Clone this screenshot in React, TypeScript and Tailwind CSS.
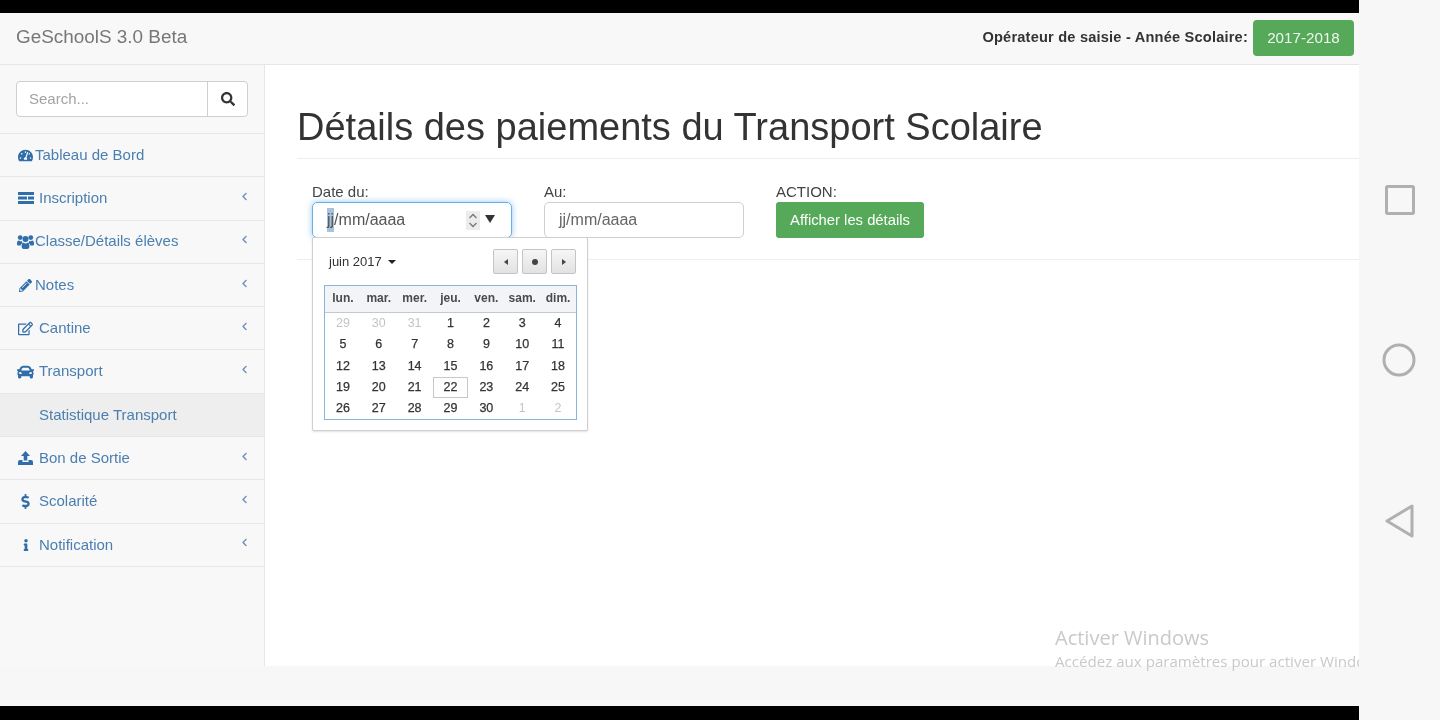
import React from "react";
import { FaTachometerAlt, FaPencilAlt, FaRegEdit, FaCar, FaDollarSign, FaInfo, FaSearch, FaChevronLeft } from "react-icons/fa";

function ListIcon() {
  return (
    <svg width="16" height="12" viewBox="0 0 16 12" fill="currentColor">
      <rect x="0" y="0" width="16" height="3" />
      <rect x="0" y="4.5" width="9" height="3" />
      <rect x="10" y="4.5" width="6" height="3" />
      <rect x="0" y="9" width="16" height="3" />
    </svg>
  );
}

function OpenIcon() {
  return (
    <svg width="15" height="14" viewBox="0 0 15 14" fill="currentColor">
      <path d="M7.5 0 L12 5 H9.3 V9.5 H5.7 V5 H3 Z" />
      <path d="M0 11 Q0 9 2 9 H4.5 V11 H10.5 V9 H13 Q15 9 15 11 V14 H0 Z" />
    </svg>
  );
}

function UsersIcon() {
  return (
    <svg width="17" height="14" viewBox="0 0 17 14" fill="currentColor">
      <circle cx="3.2" cy="2.6" r="2.4" />
      <circle cx="13.8" cy="2.6" r="2.4" />
      <circle cx="8.5" cy="4" r="3" />
      <path d="M0 9 Q0 5.6 2 5.6 Q3 6.4 4.6 6 Q4.8 7.6 6 8 Q3.6 8.6 3.6 10.4 H0.8 Q0 10.4 0 9 Z" />
      <path d="M17 9 Q17 5.6 15 5.6 Q14 6.4 12.4 6 Q12.2 7.6 11 8 Q13.4 8.6 13.4 10.4 H16.2 Q17 10.4 17 9 Z" />
      <path d="M4.6 11.6 Q4.6 7.8 6.4 7.8 Q8.5 9.2 10.6 7.8 Q12.4 7.8 12.4 11.6 Q12.4 14 10.6 14 H6.4 Q4.6 14 4.6 11.6 Z" />
    </svg>
  );
}

type Item = { label: string; icon: React.ReactNode; tight?: boolean; chevron?: boolean; sub?: string };

const items: Item[] = [
  { label: "Tableau de Bord", icon: <FaTachometerAlt size={15} />, tight: true },
  { label: "Inscription", icon: <ListIcon />, chevron: true },
  { label: "Classe/Détails élèves", icon: <UsersIcon />, tight: true, chevron: true },
  { label: "Notes", icon: <FaPencilAlt size={13} />, tight: true, chevron: true },
  { label: "Cantine", icon: <FaRegEdit size={15} />, chevron: true },
  { label: "Transport", icon: <FaCar size={18} />, chevron: true, sub: "Statistique Transport" },
  { label: "Bon de Sortie", icon: <OpenIcon />, chevron: true },
  { label: "Scolarité", icon: <FaDollarSign size={15} />, chevron: true },
  { label: "Notification", icon: <FaInfo size={12} />, chevron: true },
];

const weeks: { d: number; muted?: boolean; today?: boolean }[][] = [
  [{ d: 29, muted: true }, { d: 30, muted: true }, { d: 31, muted: true }, { d: 1 }, { d: 2 }, { d: 3 }, { d: 4 }],
  [{ d: 5 }, { d: 6 }, { d: 7 }, { d: 8 }, { d: 9 }, { d: 10 }, { d: 11 }],
  [{ d: 12 }, { d: 13 }, { d: 14 }, { d: 15 }, { d: 16 }, { d: 17 }, { d: 18 }],
  [{ d: 19 }, { d: 20 }, { d: 21 }, { d: 22, today: true }, { d: 23 }, { d: 24 }, { d: 25 }],
  [{ d: 26 }, { d: 27 }, { d: 28 }, { d: 29 }, { d: 30 }, { d: 1, muted: true }, { d: 2, muted: true }],
];

const days = ["lun.", "mar.", "mer.", "jeu.", "ven.", "sam.", "dim."];

function NavButton({ children }: { children: React.ReactNode }) {
  return (
    <div className="w-[25px] h-[25px] flex items-center justify-center rounded-[2px] border border-[#c4c4c4] bg-gradient-to-b from-[#f6f6f6] to-[#e2e2e2] text-[#444]">
      {children}
    </div>
  );
}

function Calendar() {
  return (
    <div className="absolute left-[15px] top-[78px] z-10 w-[276px] h-[194px] bg-white border border-[#cfcfcf] rounded-[2px] shadow-[0_1px_2px_rgba(0,0,0,0.12)] px-[11px] pt-[11px]">
      <div className="flex items-center justify-between h-[25px] mb-[11px]">
        <div className="flex items-center gap-[6px] pl-[5px] text-[13px] text-[#333]">
          juin 2017
          <span className="w-0 h-0 border-x-[4px] border-x-transparent border-t-[4px] border-t-[#222]" />
        </div>
        <div className="flex gap-[4px]">
          <NavButton>
            <span className="w-0 h-0 border-y-[3.5px] border-y-transparent border-r-[4px] border-r-[#444]" />
          </NavButton>
          <NavButton>
            <span className="w-[6px] h-[6px] rounded-full bg-[#444]" />
          </NavButton>
          <NavButton>
            <span className="w-0 h-0 border-y-[3.5px] border-y-transparent border-l-[4px] border-l-[#444]" />
          </NavButton>
        </div>
      </div>
      <div className="w-[253px] h-[135px] border border-[#8ab4e0]">
        <div className="grid grid-cols-7 h-[27px] pb-[2px] items-center bg-[#f2f4f8] border-b border-[#c9c9c9] text-[12px] font-bold text-[#4a4a4a] text-center">
          {days.map((d) => (
            <div key={d}>{d}</div>
          ))}
        </div>
        {weeks.map((w, i) => (
          <div key={i} className="grid grid-cols-7 h-[21.2px] text-[12.5px] text-center">
            {w.map((c, j) => (
              <div
                key={j}
                className={
                  "flex items-center justify-center " +
                  (c.muted ? "text-[#c4c4c4] " : "text-[#333] [-webkit-text-stroke:0.25px_#333] ") +
                  (c.today ? "border border-[#c8c8c8] " : "")
                }
              >
                {c.d}
              </div>
            ))}
          </div>
        ))}
      </div>
    </div>
  );
}

export default function App() {
  return (
    <div className="w-[1440px] h-[720px] flex bg-[#f7f7f7] overflow-hidden blur-[0.6px] font-['Liberation_Sans',Arial,sans-serif] text-[15px] text-[#333]">
      <div className="w-[1359px] flex flex-col shrink-0">
        <div className="h-[13px] bg-black shrink-0" />
        <header className="h-[52px] shrink-0 bg-[#f8f8f8] border-b border-[#e7e7e7] flex items-center justify-between pl-[16px] pr-[5px]">
          <div className="text-[18.9px] text-[#777] -mt-[3px]">GeSchoolS 3.0 Beta</div>
          <div className="flex items-center gap-[5px] -mt-[1px]">
            <span className="text-[14.6px] font-bold text-[#333] tracking-[0.2px]">Opérateur de saisie - Année Scolaire:</span>
            <span className="w-[101px] h-[36px] rounded-[4px] bg-[#55a958] text-[#f1f6f1] flex items-center justify-center text-[15.2px]">2017-2018</span>
          </div>
        </header>
        <div className="flex-1 flex min-h-0">
          <aside className="w-[265px] shrink-0 border-r border-[#e7e7e7] bg-[#f8f8f8]">
            <div className="h-[69px] border-b border-[#e7e7e7] pl-[16px] pt-[16px]">
              <div className="w-[232px] h-[36px] flex bg-white border border-[#cfcfcf] rounded-[4px]">
                <div className="flex-1 pl-[12px] flex items-center text-[#a3a3a3]">Search...</div>
                <div className="w-[40px] border-l border-[#cfcfcf] flex items-center justify-center text-[#333]">
                  <FaSearch size={14} />
                </div>
              </div>
            </div>
            {items.map((it) => (
              <React.Fragment key={it.label}>
                <div className="h-[43.3px] border-b border-[#e7e7e7] flex items-center pl-[17px] pr-[15px] text-[#4a7fb0]">
                  <span className={"flex items-center shrink-0 text-[#2f6ea8] " + (it.tight ? "w-[18px]" : "w-[22px]")}>
                    <span className="w-[17px] flex justify-center">{it.icon}</span>
                  </span>
                  <span className="flex-1">{it.label}</span>
                  {it.chevron && <FaChevronLeft size={9} className="text-[#6c93ba] -mt-[4px]" />}
                </div>
                {it.sub && (
                  <div className="h-[43.3px] border-b border-[#e7e7e7] bg-[#eeeeee] flex items-center pl-[39px] text-[#4a7fb0]">
                    {it.sub}
                  </div>
                )}
              </React.Fragment>
            ))}
          </aside>
          <main className="flex-1 min-w-0 bg-white relative h-[601px] pl-[32px]">
            <h1 className="text-[38px] leading-[44px] text-[#333] pt-[40px] pb-[8px] border-b border-[#eeeeee] h-[94px]">
              Détails des paiements du Transport Scolaire
            </h1>
            <div className="relative h-[101px] border-b border-[#eeeeee] pl-[15px] pt-[24px] flex gap-[32px]">
              <div className="w-[200px]">
                <div className="h-[19px] leading-[17px] text-[#444]">Date du:</div>
                <div className="h-[36px] rounded-[5px] border border-[#66afe9] shadow-[0_0_6px_rgba(102,175,233,0.7)] flex items-center pl-[14px] pr-[16px] text-[16px] text-[#555]">
                  <span className="bg-[#a9c3de]">jj</span>
                  <span className="flex-1">/mm/aaaa</span>
                  <span className="w-[14px] h-[19px] bg-[#ececec] text-[#777] flex flex-col items-center justify-center mr-[5px]">
                    <svg width="10" height="17" viewBox="0 0 10 17" fill="none" stroke="currentColor" strokeWidth="1.3">
                      <path d="M1.5 6 L5 2.5 L8.5 6" />
                      <path d="M1.5 11 L5 14.5 L8.5 11" />
                    </svg>
                  </span>
                  <span className="w-0 h-0 border-x-[5.5px] border-x-transparent border-t-[8px] border-t-[#333] -mt-[2px]" />
                </div>
              </div>
              <div className="w-[200px]">
                <div className="h-[19px] leading-[17px] text-[#444]">Au:</div>
                <div className="h-[36px] rounded-[5px] border border-[#cfcfcf] flex items-center pl-[14px] text-[16px] text-[#666]">jj/mm/aaaa</div>
              </div>
              <div>
                <div className="h-[19px] leading-[17px] text-[#444]">ACTION:</div>
                <div className="w-[148px] h-[36px] rounded-[3px] bg-[#55a958] text-white flex items-center justify-center text-[14.8px]">Afficher les détails</div>
              </div>
              <Calendar />
            </div>
            <div className="absolute left-[790px] top-[561px] w-[304px] overflow-hidden whitespace-nowrap font-['Open_Sans',sans-serif] text-[#c9c9c9] z-10">
              <div className="text-[20px] leading-[24px]">Activer Windows</div>
              <div className="text-[15.1px] leading-[22px]">Accédez aux paramètres pour activer Windows.</div>
            </div>
          </main>
        </div>
        <div className="h-[40px] shrink-0 bg-[#f7f7f7]" />
        <div className="h-[14px] bg-black shrink-0" />
      </div>
      <div className="flex-1 flex flex-col items-center pt-[184px] pb-[182px] justify-between text-[#b0b0b0]">
        <svg width="32" height="32" viewBox="0 0 32 32" fill="none" stroke="currentColor" strokeWidth="3" strokeLinejoin="round">
          <rect x="2.5" y="2.5" width="27" height="27" rx="1" />
        </svg>
        <svg width="34" height="34" viewBox="0 0 34 34" fill="none" stroke="currentColor" strokeWidth="3" className="-ml-[2px]">
          <circle cx="17" cy="17" r="15" />
        </svg>
        <svg width="30" height="34" viewBox="0 0 30 34" fill="none" stroke="currentColor" strokeWidth="3" strokeLinejoin="round" className="ml-[1px]">
          <path d="M27 2 V32 L2 17 Z" />
        </svg>
      </div>
    </div>
  );
}
